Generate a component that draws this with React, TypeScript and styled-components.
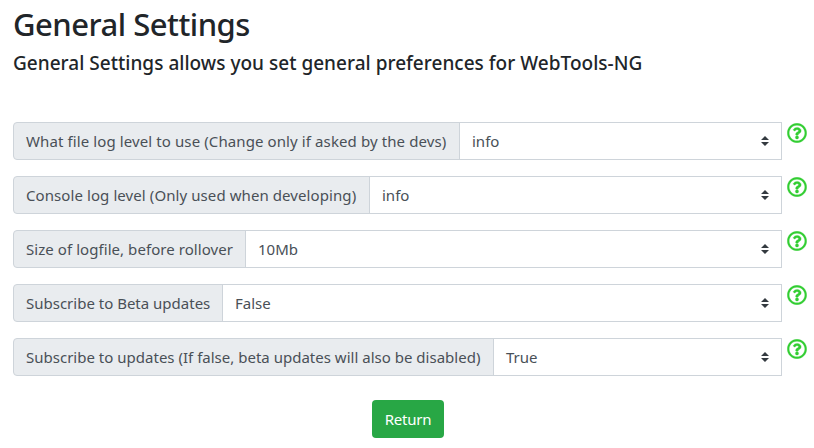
import React from 'react';
import styled, { createGlobalStyle } from 'styled-components';
import { FaRegQuestionCircle } from 'react-icons/fa';

const GlobalStyle = createGlobalStyle`
  *, *::before, *::after { box-sizing: border-box; }
  body {
    margin: 0;
    background: #fff;
    color: #212529;
    font-family: "Noto Sans", "Open Sans", sans-serif;
    font-size: 15px;
    line-height: 24px;
    overflow: hidden;
  }
`;

const Page = styled.main`
  height: 448px;
  padding: 5px 7px 0 13px;
  white-space: nowrap;
`;

const Title = styled.h1`
  margin: 0 0 9px;
  font-size: 31px;
  font-weight: 540;
  line-height: 38px;
  letter-spacing: -0.5px;
`;

const Subtitle = styled.h2`
  margin: 0 0 48px;
  font-size: 19px;
  font-weight: 500;
  line-height: 22px;
  letter-spacing: 0.02px;
`;

const SettingList = styled.div`
  display: flex;
  flex-direction: column;
  gap: 16px;
`;

const SettingRow = styled.div`
  display: flex;
  align-items: flex-start;
  gap: 5px;
  height: 38px;
`;

const InputGroup = styled.div`
  display: flex;
  width: 769px;
  height: 38px;
  color: #495057;
`;

const Label = styled.span<{ $width: number; $tracking: number }>`
  flex: none;
  width: ${({ $width }) => $width}px;
  padding: 6px 0 6px 12px;
  border: 1px solid #ced4da;
  border-radius: 4px 0 0 4px;
  background: #e9ecef;
  letter-spacing: ${({ $tracking }) => $tracking}px;
`;

const SelectBox = styled.div`
  display: flex;
  flex: 1;
  align-items: center;
  justify-content: space-between;
  margin-left: -1px;
  padding: 0 12px;
  border: 1px solid #ced4da;
  background: #fff;
`;

const Caret = styled.svg`
  width: 8px;
  height: 10px;
  fill: #343a40;
`;

const HelpIcon = styled(FaRegQuestionCircle)`
  width: 20px;
  height: 20px;
  margin-top: 0.5px;
  color: #32cd32;
  stroke: currentColor;
  stroke-width: 8px;
`;

const Actions = styled.div`
  display: flex;
  justify-content: center;
  width: 790px;
  margin-top: 24px;
`;

const Button = styled.button`
  width: 72px;
  height: 38px;
  padding: 0;
  border: 0;
  border-radius: 4px;
  background: #28a745;
  color: #fff;
  font: inherit;
  letter-spacing: -0.2px;
`;

const settings = [
  { label: 'What file log level to use (Change only if asked by the devs)', value: 'info', width: 447, tracking: 0.105 },
  { label: 'Console log level (Only used when developing)', value: 'info', width: 357, tracking: 0.085 },
  { label: 'Size of logfile, before rollover', value: '10Mb', width: 233, tracking: 0.06 },
  { label: 'Subscribe to Beta updates', value: 'False', width: 210, tracking: 0 },
  { label: 'Subscribe to updates (If false, beta updates will also be disabled)', value: 'True', width: 481, tracking: 0.01 },
];

export default function App() {
  return (
    <Page>
      <GlobalStyle />
      <Title>General Settings</Title>
      <Subtitle>General Settings allows you set general preferences for WebTools-NG</Subtitle>
      <SettingList>
        {settings.map(({ label, value, width, tracking }) => (
          <SettingRow key={label}>
            <InputGroup>
              <Label $width={width} $tracking={tracking}>{label}</Label>
              <SelectBox>
                {value}
                <Caret viewBox="0 0 4 5">
                  <path d="M2 0L0 2h4zm0 5L0 3h4z" />
                </Caret>
              </SelectBox>
            </InputGroup>
            <HelpIcon />
          </SettingRow>
        ))}
      </SettingList>
      <Actions>
        <Button>Return</Button>
      </Actions>
    </Page>
  );
}
